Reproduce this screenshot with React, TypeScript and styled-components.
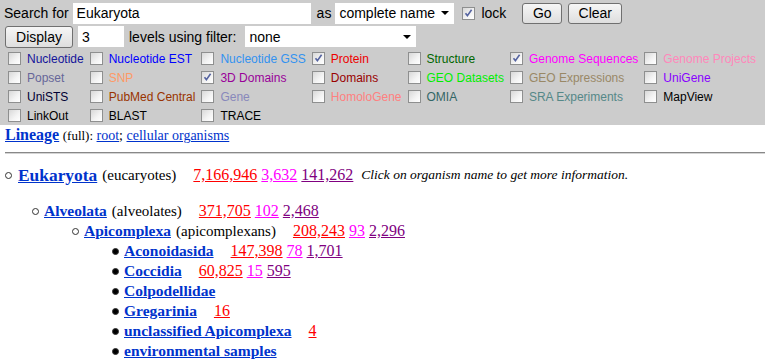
import React from "react";
import styled, { createGlobalStyle } from "styled-components";

// taxonomy browser page: grey search panel on top, lineage tree below

const GlobalStyle = createGlobalStyle`
  body {
    margin: 0;
    background: #fff;
    color: #000;
    font-family: "Liberation Serif", "Times New Roman", serif;
  }
`;

const Panel = styled.div`
  background: #cccccc;
  height: 125px;
  padding-top: 2px;
  box-sizing: border-box;
  overflow: hidden;
  font-family: "Liberation Sans", Arial, sans-serif;
  font-size: 14px;
`;

const ControlRow = styled.div<{ $h: number; $mt?: number }>`
  display: flex;
  align-items: center;
  height: ${(p) => p.$h}px;
  margin-top: ${(p) => p.$mt ?? 0}px;
  padding-left: 4px;
`;

const Text = styled.span<{ $ml?: number }>`
  margin-left: ${(p) => p.$ml ?? 0}px;
  white-space: nowrap;
`;

const TextInput = styled.div<{ $w: number; $ml?: number }>`
  width: ${(p) => p.$w}px;
  height: 21px;
  margin-left: ${(p) => p.$ml ?? 0}px;
  background: #fff;
  box-sizing: border-box;
  padding-left: 4px;
  display: flex;
  align-items: center;
`;

const Select = styled(TextInput)`
  justify-content: space-between;
  padding-right: 5px;
`;

const Arrow = styled.span`
  width: 0;
  height: 0;
  border-left: 4px solid transparent;
  border-right: 4px solid transparent;
  border-top: 4px solid #000;
`;

const Button = styled.button<{ $w: number; $h?: number; $ml?: number }>`
  width: ${(p) => p.$w}px;
  height: ${(p) => p.$h ?? 21}px;
  margin-left: ${(p) => p.$ml ?? 0}px;
  padding: 0;
  font-family: "Liberation Sans", Arial, sans-serif;
  font-size: 14px;
  color: #000;
  background: linear-gradient(#f6f6f6, #dedede);
  border: 1px solid #707070;
  border-radius: 3px;
`;

const BoxFrame = styled.span<{ $ml?: number }>`
  display: inline-block;
  flex: none;
  width: 13px;
  height: 13px;
  margin-left: ${(p) => p.$ml ?? 0}px;
  box-sizing: border-box;
  border: 1px solid #8e8f8f;
  background: linear-gradient(135deg, #d8d8d8 0%, #f4f4f4 60%, #ffffff 100%);
`;

const Check = ({ on, ml }: { on?: boolean; ml?: number }) => (
  <BoxFrame $ml={ml}>
    {on && (
      <svg width="11" height="11" viewBox="0 0 11 11" style={{ display: "block" }}>
        <path d="M2.5 5.2 L4.4 7.6 L8.6 1.8" fill="none" stroke="#5563a0" strokeWidth="1.6" />
      </svg>
    )}
  </BoxFrame>
);

const DbGrid = styled.div`
  display: grid;
  grid-template-columns: repeat(7, max-content);
  grid-auto-rows: 19px;
  margin-top: 1px;
  padding-left: 5px;
  font-size: 12px;
`;

const DbCell = styled.label<{ $color: string }>`
  display: flex;
  align-items: center;
  gap: 6px;
  padding: 0 3px;
  color: ${(p) => p.$color};
  white-space: nowrap;
`;

const databases: [string, string, boolean?][] = [
  ["Nucleotide", "#14149a"],
  ["Nucleotide EST", "#0000ff"],
  ["Nucleotide GSS", "#3392f0"],
  ["Protein", "#ee0000", true],
  ["Structure", "#006600"],
  ["Genome Sequences", "#ff00ff", true],
  ["Genome Projects", "#ff88bb"],
  ["Popset", "#666699"],
  ["SNP", "#ff9966"],
  ["3D Domains", "#990099", true],
  ["Domains", "#990000"],
  ["GEO Datasets", "#00ee00"],
  ["GEO Expressions", "#998866"],
  ["UniGene", "#8800ff"],
  ["UniSTS", "#000033"],
  ["PubMed Central", "#993300"],
  ["Gene", "#8888bb"],
  ["HomoloGene", "#ff8080"],
  ["OMIA", "#336666"],
  ["SRA Experiments", "#558888"],
  ["MapView", "#000000"],
  ["LinkOut", "#000000"],
  ["BLAST", "#000000"],
  ["TRACE", "#000000"],
];

const Content = styled.div`
  padding-left: 5px;
`;

const LineageRow = styled.div`
  height: 19px;
  line-height: 19px;
  font-size: 14px;
`;

const Link = styled.a<{ $size?: number; $bold?: boolean }>`
  color: #0033cc;
  font-size: ${(p) => p.$size ?? 15.5}px;
  font-weight: ${(p) => (p.$bold ? "bold" : "normal")};
  text-decoration: underline;
  cursor: pointer;
`;

const Small = styled.span`
  font-size: 13px;
`;

const Rule = styled.hr`
  margin: 8px 0 0 0;
  border: 0;
  border-top: 1px solid #888;
  border-bottom: 1px solid #d4d4d4;
  height: 0;
`;

const indents = [0, 27, 67, 107];

const TreeRow = styled.div<{ $level: number; $h: number; $mt?: number }>`
  display: flex;
  align-items: center;
  height: ${(p) => p.$h}px;
  margin-top: ${(p) => p.$mt ?? 0}px;
  padding-left: ${(p) => indents[p.$level]}px;
  font-size: 16px;
  white-space: nowrap;
`;

const Bullet = styled.span<{ $filled?: boolean; $gap: number }>`
  flex: none;
  width: 7px;
  height: 7px;
  box-sizing: border-box;
  border-radius: 50%;
  border: 1px solid #333;
  background: ${(p) => (p.$filled ? "#000" : "#fff")};
  margin-right: ${(p) => p.$gap}px;
`;

const Common = styled.span`
  margin-left: 5px;
  font-size: 15px;
`;

const Counts = styled.span`
  margin-left: 17px;
  display: inline-flex;
  gap: 4px;
`;

const Count = styled.a<{ $color: string }>`
  color: ${(p) => p.$color};
  text-decoration: underline;
`;

const Note = styled.span`
  margin-left: 8px;
  font-size: 13.5px;
  font-style: italic;
`;

type Taxon = {
  name: string;
  common?: string;
  counts?: string[];
  level: number;
};

const countColors = ["#ff0000", "#ff00ff", "#800080"];

const taxa: Taxon[] = [
  { name: "Alveolata", common: "alveolates", counts: ["371,705", "102", "2,468"], level: 1 },
  { name: "Apicomplexa", common: "apicomplexans", counts: ["208,243", "93", "2,296"], level: 2 },
  { name: "Aconoidasida", counts: ["147,398", "78", "1,701"], level: 3 },
  { name: "Coccidia", counts: ["60,825", "15", "595"], level: 3 },
  { name: "Colpodellidae", level: 3 },
  { name: "Gregarinia", counts: ["16"], level: 3 },
  { name: "unclassified Apicomplexa", counts: ["4"], level: 3 },
  { name: "environmental samples", level: 3 },
];

const CountList = ({ counts }: { counts: string[] }) => (
  <Counts>
    {counts.map((c, i) => (
      <Count key={i} $color={countColors[i]}>
        {c}
      </Count>
    ))}
  </Counts>
);

export default function App() {
  return (
    <>
      <GlobalStyle />
      <Panel>
        <ControlRow $h={22}>
          <Text>Search for</Text>
          <TextInput $w={238} $ml={4}>Eukaryota</TextInput>
          <Text $ml={6}>as</Text>
          <Select $w={119} $ml={4}>
            complete name <Arrow />
          </Select>
          <Check on ml={8} />
          <Text $ml={6}>lock</Text>
          <Button $w={40} $ml={16}>Go</Button>
          <Button $w={54} $ml={6}>Clear</Button>
        </ControlRow>
        <ControlRow $h={23} $mt={1}>
          <Button $w={68} $h={22} $ml={1}>Display</Button>
          <TextInput $w={46} $ml={5}>3</TextInput>
          <Text $ml={5}>levels using filter:</Text>
          <Select $w={171} $ml={9}>
            none <Arrow />
          </Select>
        </ControlRow>
        <DbGrid>
          {databases.map(([label, color, on]) => (
            <DbCell key={label} $color={color}>
              <Check on={on} />
              {label}
            </DbCell>
          ))}
        </DbGrid>
      </Panel>
      <Content>
        <LineageRow>
          <Link $bold $size={16}>Lineage</Link> <Small>(full):</Small> <Link $size={14}>root</Link>;{" "}
          <Link $size={14}>cellular organisms</Link>
        </LineageRow>
        <Rule />
        <TreeRow $level={0} $h={22} $mt={10}>
          <Bullet $gap={6} />
          <Link $bold $size={17.4}>Eukaryota</Link>
          <Common>(eucaryotes)</Common>
          <CountList counts={["7,166,946", "3,632", "141,262"]} />
          <Note>Click on organism name to get more information.</Note>
        </TreeRow>
        {taxa.map((t, i) => (
          <TreeRow key={t.name} $level={t.level} $h={20} $mt={i === 0 ? 15 : 0}>
            <Bullet $gap={5} $filled={t.level === 3} />
            <Link $bold>{t.name}</Link>
            {t.common && <Common>({t.common})</Common>}
            {t.counts && <CountList counts={t.counts} />}
          </TreeRow>
        ))}
      </Content>
    </>
  );
}
